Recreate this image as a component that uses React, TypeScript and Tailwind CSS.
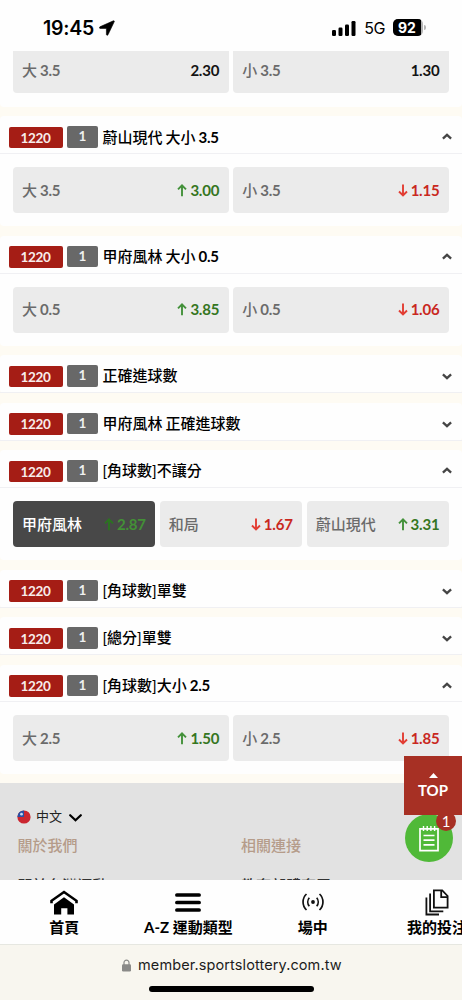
import { ReactNode } from 'react'

interface Option {
  label: string
  odds: string
  trend?: 'up' | 'down'
  selected?: boolean
}

interface Market {
  title: string
  options?: Option[]
}

const markets: Market[] = [
  {
    title: '蔚山現代 大小 3.5',
    options: [
      { label: '大 3.5', odds: '3.00', trend: 'up' },
      { label: '小 3.5', odds: '1.15', trend: 'down' },
    ],
  },
  {
    title: '甲府風林 大小 0.5',
    options: [
      { label: '大 0.5', odds: '3.85', trend: 'up' },
      { label: '小 0.5', odds: '1.06', trend: 'down' },
    ],
  },
  { title: '正確進球數' },
  { title: '甲府風林 正確進球數' },
  {
    title: '[角球數]不讓分',
    options: [
      { label: '甲府風林', odds: '2.87', trend: 'up', selected: true },
      { label: '和局', odds: '1.67', trend: 'down' },
      { label: '蔚山現代', odds: '3.31', trend: 'up' },
    ],
  },
  { title: '[角球數]單雙' },
  { title: '[總分]單雙' },
  {
    title: '[角球數]大小 2.5',
    options: [
      { label: '大 2.5', odds: '1.50', trend: 'up' },
      { label: '小 2.5', odds: '1.85', trend: 'down' },
    ],
  },
]

// the line value (3.5, 0.5 ...) is set bolder than the Chinese text before it
function LineText({ text }: { text: string }) {
  const match = text.match(/^(.*?)(\d\.\d)$/)
  if (!match) return <>{text}</>
  return (
    <>
      {match[1]}
      <span className="font-bold tracking-[-0.3px]">{match[2]}</span>
    </>
  )
}

function TrendArrow({ trend }: { trend: 'up' | 'down' }) {
  return (
    <svg
      width="10"
      height="13"
      viewBox="0 0 10 13"
      fill="none"
      stroke="currentColor"
      strokeWidth="1.9"
      className="mr-[3px]"
    >
      {trend === 'up' ? <path d="M5 12.3V1.6M1 5.4l4-4 4 4" /> : <path d="M5 0.5v10.8M1 7.5l4 4 4-4" />}
    </svg>
  )
}

function OptionBox({ option }: { option: Option }) {
  const oddsColor =
    option.trend === 'up' ? 'text-[#35761f]' : option.trend === 'down' ? 'text-[#c9281e]' : 'text-[#141414]'
  const arrowColor =
    option.trend === 'down' ? 'text-[#e23d33]' : option.selected ? 'text-[#2b7420]' : 'text-[#43913a]'

  return (
    <div
      className={`flex h-[46px] flex-1 items-center justify-between rounded-[4px] pl-[9px] pr-[9.5px] text-[15px] ${
        option.selected ? 'bg-[#484848]' : 'bg-[#ebebeb]'
      }`}
    >
      <span
        className={`[word-spacing:-0.8px] ${option.selected ? 'font-medium text-white' : 'font-medium text-[#6b6b6b]'}`}
      >
        <LineText text={option.label} />
      </span>
      <span className="flex items-center">
        {option.trend && (
          <span className={arrowColor}>
            <TrendArrow trend={option.trend} />
          </span>
        )}
        <span className={`font-bold tracking-[-0.2px] ${option.selected ? 'text-[#439036]' : oddsColor}`}>
          {option.odds}
        </span>
      </span>
    </div>
  )
}

function MarketCard({ market }: { market: Market }) {
  const open = Boolean(market.options)
  return (
    <section className="mb-[9.7px] rounded-[4px] bg-[#fefefe]">
      <header className="flex h-[37.8px] items-start border-b border-[#f0f0f3] pl-[8.5px] pr-[10px] pt-[10px]">
        <span className="mt-[0.7px] h-[21.5px] w-[54px] rounded-[2px] bg-[#a51d15] text-center text-[13.5px] font-bold leading-[22px] tracking-[-0.3px] text-[#f8eceb]">
          1220
        </span>
        <span className="ml-[4.5px] h-[21.5px] w-[31px] rounded-[2px] bg-[#686868] text-center text-[13.5px] font-bold leading-[21px] text-[#f0f0f0]">
          1
        </span>
        <h3 className="ml-[4.5px] mt-[-0.8px] flex-1 text-[15px] font-medium leading-[22px] text-black [word-spacing:-0.8px]">
          <LineText text={market.title} />
        </h3>
        <svg
          width="10"
          height="7"
          viewBox="0 0 10 7"
          fill="none"
          stroke="#454545"
          strokeWidth="2.3"
          className={open ? 'mt-[7px]' : 'mt-[8px]'}
        >
          <path d={open ? 'M0.9 5.6L5 1.8l4.1 3.8' : 'M0.9 1.4L5 5.2l4.1-3.8'} />
        </svg>
      </header>
      {market.options && (
        <div className="flex gap-[4.5px] px-[13px] py-[13px]">
          {market.options.map((option) => (
            <OptionBox key={option.label} option={option} />
          ))}
        </div>
      )}
    </section>
  )
}

function StatusBar() {
  return (
    <div className="flex h-[51px] shrink-0 items-start justify-between bg-[#fefefe] pl-[43px] pr-[36px] font-['Inter',sans-serif]">
      <div className="flex items-center pt-[14px]">
        <span className="text-[19.5px] font-semibold leading-[28px] tracking-[-0.2px] text-black">19:45</span>
        <svg width="16" height="16" viewBox="0 0 16 16" className="ml-[5px]">
          <path
            d="M14.4 0.8L0.9 6.8c-.8.4-.6 1.6.3 1.6h6.2v6.1c0 .9 1.2 1.1 1.6.3L15.3 1.6c.2-.5-.2-.9-.9-.8z"
            fill="#000"
            stroke="#000"
            strokeWidth="0.6"
          />
        </svg>
      </div>
      <div className="flex items-center pt-[14px]">
        <svg width="24" height="15" viewBox="0 0 24 15" className="mr-[8px]">
          <rect x="0" y="9" width="4" height="6" rx="1.2" />
          <rect x="6.5" y="6.5" width="4" height="8.5" rx="1.2" />
          <rect x="13" y="3.5" width="4" height="11.5" rx="1.2" />
          <rect x="19.5" y="0" width="4" height="15" rx="1.2" />
        </svg>
        <span className="mr-[8px] text-[16px] leading-[28px] tracking-[-0.5px] text-black">5G</span>
        <span className="mb-[2px] flex h-[17px] w-[30px] overflow-hidden rounded-[5px] bg-[#b5b5b5]">
          <span className="h-full w-[28px] bg-black text-center text-[14px] font-bold leading-[17px] text-white">92</span>
        </span>
        <span className="mb-[2px] ml-[1px] h-[5px] w-[2px] rounded-r-full bg-[#b5b5b5]" />
      </div>
    </div>
  )
}

function Footer() {
  return (
    <footer className="-mt-[1px] flex-1 bg-[#e2e2e2] pt-[23px]">
      <div className="flex h-[22px] items-center pl-[17px]">
        <svg width="14" height="14" viewBox="0 0 14 14">
          <circle cx="7" cy="7" r="6.6" fill="#cb2630" />
          <path d="M7 0.4A6.6 6.6 0 0 0 0.4 7H7z" fill="#2850a5" />
          <circle cx="4.5" cy="4.2" r="1.4" fill="#c8d6f0" />
        </svg>
        <span className="ml-[5px] text-[13px] text-[#222]">中文</span>
        <svg width="13" height="8" viewBox="0 0 13 8" fill="none" stroke="#000" strokeWidth="2.2" className="ml-[7px] mt-[2px]">
          <path d="M1.2 1.2l5.3 5 5.3-5" strokeLinecap="round" />
        </svg>
      </div>
      <div className="mt-[6px] flex pl-[17.5px] text-[15px] font-medium leading-[22px] text-[#b59c8a]">
        <span className="w-[223.5px]">關於我們</span>
        <span>相關連接</span>
      </div>
      <div className="mt-[18px] flex pl-[17.5px] text-[15px] font-medium leading-[22px] text-[#333]">
        <span className="w-[223.5px]">關於台灣運動</span>
        <span>教育部體育署</span>
      </div>
    </footer>
  )
}

function NavItem({ icon, label }: { icon: ReactNode; label: string }) {
  return (
    <div className="flex w-[124.3px] shrink-0 flex-col items-center pt-[7px]">
      <div className="flex h-[30px] items-center">{icon}</div>
      <span className="-mt-[1px] whitespace-nowrap text-[15px] font-bold leading-[22px] text-black">{label}</span>
    </div>
  )
}

function BottomNav() {
  return (
    <nav className="flex h-[64px] shrink-0 overflow-hidden bg-[#fefefe] pl-[2px]">
      <NavItem
        label="首頁"
        icon={
          <svg width="28" height="25" viewBox="0 0 28 25">
            <path d="M1.5 13.2V10.8L14 2l12.5 8.8v2.4" fill="none" stroke="#000" strokeWidth="2.6" />
            <path d="M14 7.2l10 7.4V24.4h-6.6v-6.2h-6.2v6.2H4V14.6z" />
          </svg>
        }
      />
      <NavItem
        label="A-Z 運動類型"
        icon={
          <svg width="26" height="19" viewBox="0 0 26 19" stroke="#000" strokeWidth="3.7" strokeLinecap="round">
            <path d="M1.9 2h22.2M1.9 9.5h22.2M1.9 17h22.2" />
          </svg>
        }
      />
      <NavItem
        label="場中"
        icon={
          <svg width="22" height="18" viewBox="0 0 22 18" fill="none" stroke="#111" strokeWidth="1.7">
            <circle cx="11" cy="9" r="1.9" fill="#111" stroke="none" />
            <path d="M7.3 4.8a6.6 6.6 0 0 0 0 8.4M14.7 4.8a6.6 6.6 0 0 1 0 8.4" />
            <path d="M4.5 1a11 11 0 0 0 0 16M17.5 1a11 11 0 0 1 0 16" />
          </svg>
        }
      />
      <NavItem
        label="我的投注"
        icon={
          <svg width="24" height="27" viewBox="0 0 24 27" fill="none" stroke="#111" strokeWidth="1.8">
            <path d="M8.9 1.4h8.3l5.4 5.6v11.6H8.9z" />
            <path d="M16.2 1.4v6.8h6.4" />
            <path d="M5.1 4.5v17.8h13.2M1.4 8.5v17H14" />
          </svg>
        }
      />
    </nav>
  )
}

function AddressBar() {
  return (
    <div className="h-[56px] shrink-0 border-t border-[#e6e7e1] bg-[#f8f6ef] font-['Inter',sans-serif]">
      <div className="flex h-[40px] items-center pl-[122px]">
        <svg width="9" height="13" viewBox="0 0 9 13">
          <rect x="0" y="5.2" width="9" height="7.2" rx="1.2" fill="#8a8a88" />
          <path d="M2 6V3.6a2.5 2.5 0 0 1 5 0V6" fill="none" stroke="#8a8a88" strokeWidth="1.2" />
        </svg>
        <span className="ml-[7px] text-[14.5px] tracking-[0.11px] text-[#1c1c1c]">member.sportslottery.com.tw</span>
      </div>
      <div className="ml-[149px] mt-[1px] h-[6px] w-[165px] rounded-full bg-black" />
    </div>
  )
}

export default function App() {
  return (
    <div className="relative flex h-[1000px] w-[462px] flex-col overflow-hidden bg-[#fefbf3] font-['Lato','Noto_Sans_CJK_TC',sans-serif]">
      <StatusBar />
      <main className="flex min-h-0 flex-1 flex-col overflow-hidden">
        <div className="mb-[9.3px] flex h-[56px] shrink-0 gap-[4.5px] rounded-b-[4px] bg-[#fefefe] px-[13px]">
          {[
            { label: '大 3.5', odds: '2.30' },
            { label: '小 3.5', odds: '1.30' },
          ].map((option) => (
            <div key={option.label} className="-mt-[3.6px] flex flex-1 items-start">
              <OptionBox option={option} />
            </div>
          ))}
        </div>
        <div className="shrink-0">
          {markets.map((market) => (
            <MarketCard key={market.title} market={market} />
          ))}
        </div>
        <Footer />
      </main>
      <BottomNav />
      <AddressBar />

      {/* floating bet slip and back to top */}
      <div className="absolute left-[405px] top-[814px] flex h-[48px] w-[48px] items-center justify-center rounded-full bg-[#50b938]">
        <svg width="20" height="27" viewBox="0 0 20 27" fill="none" stroke="#fff" strokeWidth="1.7" className="mt-[1px]">
          <path d="M1 3.8h18v21.8H1z" />
          <path d="M4.5 1v5M8.2 1v5M11.9 1v5M15.6 1v5" strokeWidth="1.4" />
          <path d="M4.5 10.5h11M4.5 15.2h11M4.5 19.9h11" />
        </svg>
      </div>
      <div className="absolute left-[436px] top-[811px] h-[20px] w-[20px] rounded-full bg-[#a73024] text-center text-[15px] leading-[20px] text-white">
        1
      </div>
      <div className="absolute left-[403.5px] top-[756px] flex h-[59px] w-[59px] flex-col items-center bg-[#a73024] pt-[17px]">
        <svg width="9" height="5" viewBox="0 0 9 5">
          <path d="M4.5 0L9 5H0z" fill="#fff" />
        </svg>
        <span className="mt-[2px] text-[15px] font-bold leading-[20px] text-white">TOP</span>
      </div>
    </div>
  )
}
